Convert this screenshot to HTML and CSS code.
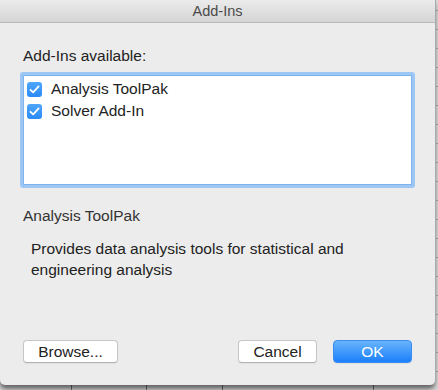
FILE: index.html
```html
<!DOCTYPE html>
<html lang="en">
<head>
    <meta charset="UTF-8">
    <title>Add-Ins</title>
    <link rel="stylesheet" href="styles.css">
</head>
<body>
    <div class="dialog">
        <div class="titlebar">Add-Ins</div>

        <div class="content">
            <div class="label">Add-Ins available:</div>

            <div class="listbox">
                <label class="item">
                    <span class="check">
                        <svg width="11" height="9" viewBox="0 0 11 9"><path d="M1.5 4.8 L4.2 7.4 L9.6 1.4" fill="none" stroke="#fff" stroke-width="1.8" stroke-linecap="round" stroke-linejoin="round"/></svg>
                    </span>
                    Analysis ToolPak
                </label>
                <label class="item">
                    <span class="check">
                        <svg width="11" height="9" viewBox="0 0 11 9"><path d="M1.5 4.8 L4.2 7.4 L9.6 1.4" fill="none" stroke="#fff" stroke-width="1.8" stroke-linecap="round" stroke-linejoin="round"/></svg>
                    </span>
                    Solver Add-In
                </label>
            </div>

            <div class="selected-name">Analysis ToolPak</div>
            <p class="description">Provides data analysis tools for statistical and engineering analysis</p>

            <div class="buttons">
                <button class="btn">Browse...</button>
                <div class="spacer"></div>
                <button class="btn btn-cancel">Cancel</button>
                <button class="btn btn-ok">OK</button>
            </div>
        </div>
    </div>
</body>
</html>
```

FILE: styles.css
```css
* {
    margin: 0;
    padding: 0;
    box-sizing: border-box;
}

body {
    width: 438px;
    height: 390px;
    overflow: hidden;
    font-family: "Liberation Sans", Arial, sans-serif;
    font-size: 15.5px;
    color: #222;
    background-color: #dadada;
    background-image:
        repeating-linear-gradient(90deg, transparent 0 71px, #6f6f6f 71px 72px, transparent 72px 75.5px),
        repeating-linear-gradient(0deg, transparent 0 18px, #a8a8a8 18px 19px);
}

.dialog {
    width: 435px;
    height: 385px;
    background: #ececec;
    border-radius: 0 0 5px 5px;
    box-shadow: 1px 0 0 #a9a9a9, 0 4px 5px rgba(0, 0, 0, 0.55);
    display: flex;
    flex-direction: column;
}

.titlebar {
    height: 23px;
    line-height: 22px;
    text-align: center;
    font-size: 14.5px;
    color: #4a4a4a;
    background: linear-gradient(#ebebeb, #d5d5d5);
    border-bottom: 1px solid #b9b9b9;
}

.content {
    flex: 1;
    display: flex;
    flex-direction: column;
    padding: 24px 23px 22px 20px;
}

.label {
    margin-left: 3px;
    margin-bottom: 7px;
}

.listbox {
    height: 116px;
    width: 395px;
    background: #fff;
    border: 3px solid #9cc7f5;
    border-radius: 3px;
    box-shadow: inset 0 0 0 1px #7fb3ee;
    padding: 3px 4px;
}

.item {
    display: flex;
    align-items: center;
    gap: 9px;
    height: 22px;
}

.check {
    width: 15px;
    height: 15px;
    border-radius: 3px;
    background: linear-gradient(#4ea6fb, #2a8af6);
    display: flex;
    align-items: center;
    justify-content: center;
}

.selected-name {
    margin: 19px 0 0 3px;
    color: #333;
}

.description {
    margin: 13px 0 0 11px;
    line-height: 21px;
    width: 360px;
}

.buttons {
    margin-top: auto;
    display: flex;
    gap: 16px;
    padding-left: 3px;
}

.spacer {
    flex: 1;
}

.btn {
    font-family: inherit;
    font-size: 15.5px;
    color: #222;
    height: 23px;
    width: 95px;
    background: #fff;
    border: 1px solid #c6c6c6;
    border-bottom-color: #b3b3b3;
    border-radius: 4px;
    box-shadow: 0 1px 1px rgba(0, 0, 0, 0.06);
}

.btn-cancel {
    width: 79px;
}

.btn-ok {
    width: 79px;
    color: #fff;
    border: 1px solid #3b8cf0;
    background: linear-gradient(#68b4fc, #1c7ffa);
}
```
